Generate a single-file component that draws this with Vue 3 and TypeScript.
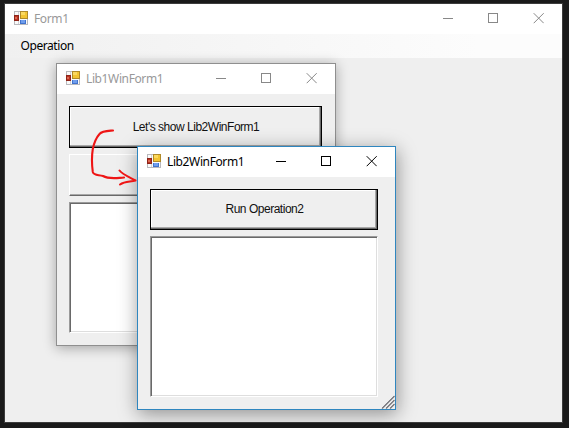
<script setup lang="ts">
interface FormWindow {
  id: string
  title: string
  active: boolean
  buttons: { label: string; isDefault: boolean }[]
}

const children: FormWindow[] = [
  {
    id: 'lib1',
    title: 'Lib1WinForm1',
    active: false,
    buttons: [
      { label: "Let's show Lib2WinForm1", isDefault: true },
      { label: '', isDefault: false },
    ],
  },
  {
    id: 'lib2',
    title: 'Lib2WinForm1',
    active: true,
    buttons: [{ label: 'Run Operation2', isDefault: true }],
  },
]
const forms: FormWindow[] = [{ id: 'main', title: 'Form1', active: false, buttons: [] }, ...children]
</script>

<template>
  <div class="desktop">
    <section v-for="form in forms" :key="form.id" class="window" :class="[form.id, { active: form.active }]">
      <header class="titlebar">
        <svg class="app-icon" width="14" height="14" viewBox="0 0 14 14">
          <rect x="0.5" y="0.5" width="13" height="13" fill="#fafafa" stroke="#b9b9bd" />
          <path d="M4.5 1v12" stroke="#d2d2d6" fill="none" />
          <rect x="6" y="0" width="8" height="8" fill="#b08a2a" />
          <rect x="7" y="1" width="6" height="6" fill="#f3c431" />
          <rect x="7" y="1" width="4" height="3" fill="#fbd95f" />
          <rect x="0" y="4" width="5" height="6" fill="#8e2418" />
          <rect x="1" y="5" width="3" height="4" fill="#bb3222" />
          <rect x="1" y="6" width="2" height="2" fill="#dc6a52" />
          <rect x="6" y="9" width="6" height="4" fill="#4173cd" />
          <rect x="7" y="9" width="4" height="3" fill="#6f9dec" />
        </svg>
        <h1 class="title">{{ form.title }}</h1>
        <div class="controls">
          <svg width="11" height="11" viewBox="0 0 11 11"><path d="M0 5.5h10" /></svg>
          <svg width="11" height="11" viewBox="0 0 11 11"><rect x="0.5" y="0.5" width="9" height="9" /></svg>
          <svg width="11" height="11" viewBox="0 0 11 11"><path d="M0.700 0.200l10 10M10.700 0.200l-10 10" /></svg>
        </div>
      </header>

      <nav v-if="form.id === 'main'" class="menu"><span>Operation</span></nav>

      <main v-else class="body">
        <button
          v-for="(button, i) in form.buttons"
          :key="i"
          class="button"
          :class="{ default: button.isDefault }"
          type="button"
        >
          {{ button.label }}
        </button>
        <div class="list"></div>
      </main>

      <svg v-if="form.active" class="grip" width="14" height="14" viewBox="0 0 14 14">
        <path d="M0 13L13 0M4 13L13 4M8 13L13 8" stroke="#fff" />
        <path d="M1 13.5L13.5 1M5 13.5L13.5 5M9 13.5L13.5 9" stroke="#77777c" stroke-width="1.5" />
      </svg>
    </section>

    <svg class="arrow" width="52" height="62" viewBox="88 127 52 62">
      <path d="M113 130.500C107 131 102 131 99.500 134C96 138 94 143 92.800 149C91.500 157 92 166 92.800 172C94 176 99 174.500 103 176C109 179.500 116 178 124 177.500" />
      <path d="M119.500 170.500C122 174 129 177 135.500 180.500C130 182 125 181 120 184.500" />
    </svg>
  </div>
</template>

<style>
body {
  background: #1a1a1a;
  overflow: hidden;
}
</style>

<style scoped>
.desktop {
  position: relative;
  width: 569px;
  height: 428px;
  overflow: hidden;
  background: #1a1a1a;
}
.window {
  position: absolute;
  box-sizing: border-box;
  display: flex;
  flex-direction: column;
  background: #efefef;
  border: 1px solid #8f8f8f;
}
.main {
  left: 4px;
  top: 3px;
  width: 559px;
  height: 420px;
  border-color: #3c3c3c;
}
.lib1 {
  left: 56px;
  top: 63px;
  width: 280px;
  height: 283px;
  box-shadow: 0 2px 12px rgba(0, 0, 0, 0.32);
}
.lib2 {
  left: 137px;
  top: 146px;
  width: 259px;
  height: 264px;
  border-color: #2f86bf;
  box-shadow: 1px 4px 18px rgba(0, 0, 0, 0.4);
}
.titlebar {
  display: flex;
  align-items: center;
  flex: none;
  height: 30px;
  padding: 0 18px 0 9px;
  background: #fff;
}
.app-icon {
  flex: none;
  margin-bottom: 2px;
}
.title {
  margin: 0 0 0 6px;
  font: 400 12px/16px 'Noto Sans', sans-serif;
  letter-spacing: -0.38px;
  color: #999;
}
.active .title {
  color: #000;
}
.controls {
  display: flex;
  gap: 34px;
  margin: 0 0 1px auto;
}
.controls svg {
  fill: none;
  stroke: #888;
  stroke-width: 1;
}
.active .controls svg {
  stroke: #000;
}
.menu {
  display: flex;
  align-items: center;
  height: 24px;
  padding-left: 15.5px;
  background: linear-gradient(90deg, #f0f0f0, #fcfcfc 85%);
  font: 12px/16px 'Noto Sans', sans-serif;
  letter-spacing: -0.42px;
  color: #000;
}
.body {
  flex: 1;
  display: flex;
  flex-direction: column;
  gap: 6px;
  padding: 12px 13px 12px 12px;
}
.lib2 .body {
  padding: 12px 17px 12px 12px;
}
.button {
  box-sizing: border-box;
  flex: none;
  height: 42px;
  padding: 0 0 0 1px;
  border: 1px solid;
  border-color: #fff #696969 #696969 #fff;
  box-shadow: inset -1px -1px #a8a8a8;
  background: #efefef;
  font: 12px/14px 'Liberation Sans', sans-serif;
  letter-spacing: -0.48px;
  color: #111;
}
.button.default {
  border-color: #000;
  box-shadow: inset -1px -1px #696969, inset -2px -2px #a8a8a8, inset 1px 1px #fff;
}
.lib2 .button {
  height: 41px;
  padding-bottom: 2px;
}
.list {
  flex: 1;
  box-sizing: border-box;
  border: 1px solid;
  border-color: #9a9a9a #fff #fff #9a9a9a;
  box-shadow: inset 1px 1px #696969, inset -1px -1px #dedede;
  background: #fff;
}
.grip {
  position: absolute;
  right: 0;
  bottom: 0;
  fill: none;
}
.arrow {
  position: absolute;
  left: 88px;
  top: 127px;
  fill: none;
  stroke: #ee1515;
  stroke-width: 2.1;
  stroke-linecap: round;
  stroke-linejoin: round;
}
</style>
